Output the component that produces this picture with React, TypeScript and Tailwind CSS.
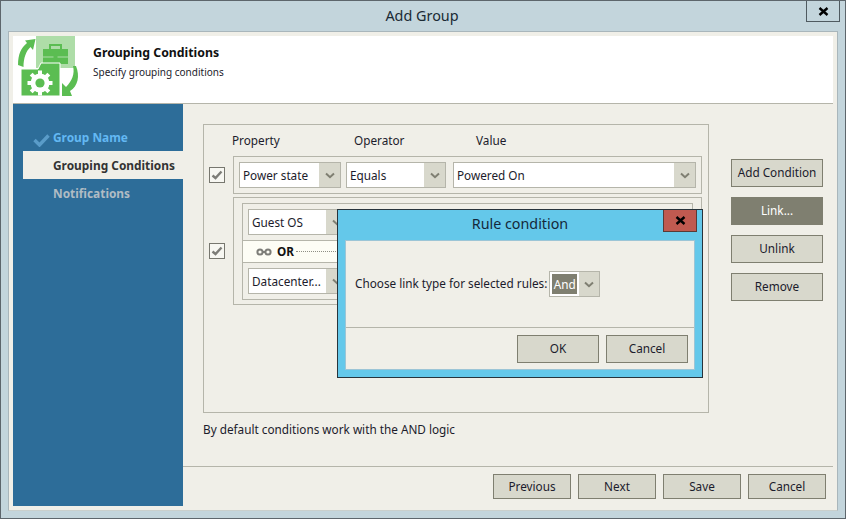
const Chevron = () => (
  <svg width="10" height="7" viewBox="0 0 10 7" className="shrink-0">
    <path d="M1 1.5 L5 5.2 L9 1.5" fill="none" stroke="#7f7f72" strokeWidth="2" />
  </svg>
);

const Combo = ({ text, className }: { text: string; className: string }) => (
  <div className={`flex h-[26px] shrink-0 border border-[#b5b5aa] bg-white ${className}`}>
    <div className="flex-1 truncate pl-[3px] leading-[24px]">{text}</div>
    <div className="flex w-[21px] items-center justify-center bg-[#d8d8cc]">
      <Chevron />
    </div>
  </div>
);

const Check = () => (
  <div className="flex h-4 w-4 shrink-0 items-center justify-center border border-[#77776f] bg-[#f7f7f2]">
    <svg width="12" height="10" viewBox="0 0 12 10">
      <path d="M1.5 5.5 L4.5 8 L10.5 1.5" fill="none" stroke="#7d7d78" strokeWidth="2.4" />
    </svg>
  </div>
);

const Btn = ({ text, className, active }: { text: string; className: string; active?: boolean }) => (
  <div
    className={`flex items-center justify-center border ${
      active ? "border-[#7f7f70] bg-[#7f7f70] text-white" : "border-[#7f7f70] bg-[#d8d8cc] text-[#1c1c2c]"
    } ${className}`}
  >
    {text}
  </div>
);

const CloseX = ({ color }: { color: string }) => (
  <svg width="11" height="9" viewBox="0 0 11 9">
    <path d="M1.5 1 L9.5 8 M9.5 1 L1.5 8" fill="none" stroke={color} strokeWidth="2.4" />
  </svg>
);

const gearTeeth = [0, 45, 90, 135, 180, 225, 270, 315];

const Logo = () => (
  <svg width="62" height="61" viewBox="0 0 62 61" className="shrink-0">
    <path d="M18 0 H57 V32 H18 Z" fill="#aedda8" />
    <path d="M25 13 H50 V28 H25 Z" fill="#5bbd52" />
    <path d="M32 13 V9 H43 V13" fill="none" stroke="#5bbd52" strokeWidth="2" />
    <path d="M25 21 H50" stroke="#aedda8" strokeWidth="1" />
    <path d="M35.5 19 H39.5 V23 H35.5 Z" fill="#5bbd52" />
    <path d="M3 33 H20 L23 27 H42 V60 H3 Z" fill="#5bbd52" stroke="#ffffff" strokeWidth="1" />
    {gearTeeth.map((a) => (
      <rect key={a} x="20" y="34.5" width="4" height="5" fill="#ffffff" transform={`rotate(${a} 22 47)`} />
    ))}
    <circle cx="22" cy="47" r="9.5" fill="#ffffff" />
    <circle cx="22" cy="47" r="4.6" fill="#5bbd52" />
    <path d="M0 29 C0 18 3 12 9 7 L7 4.5 L17.5 3 L15 14 L12.5 11 C8 15 5.5 22 5.5 31 Z" fill="#5bbd52" />
    <path d="M58 30 C62 40 60 50 52 55 L54 60 L44 60 L44 47 L48 51 C54 45 57 38 55 30 Z" fill="#5bbd52" />
  </svg>
);

export default function App() {
  return (
    <div className="relative flex h-[519px] w-[846px] flex-col overflow-hidden border border-[#5d666c] bg-[#c3d5dc] font-['Noto_Sans','DejaVu_Sans',sans-serif] text-[11.75px] text-[#1c1c2c]">
      <div className="flex h-[30px] shrink-0 items-center justify-center pr-[2px] text-[14.4px] text-[#1a2a34]">Add Group</div>
      <div className="absolute right-[5px] top-0 flex h-[21px] w-[34px] items-center justify-center border border-[#4f5a60] border-t-0">
        <CloseX color="#000" />
      </div>

      <div className="mx-[7px] flex h-[480px] flex-col border border-[#a9b6bb] border-b-[#c9cfcc] bg-[#f0efe8] p-[4px]">
        <div className="flex h-[68px] shrink-0 items-start border-b border-[#b5b5aa] bg-white pl-[5px]">
          <Logo />
          <div className="pl-[13px] pt-[9px]">
            <div className="text-[12.3px] font-bold leading-[16px] text-[#111]">Grouping Conditions</div>
            <div className="mt-[3px] text-[10px] leading-[16px]">Specify grouping conditions</div>
          </div>
        </div>

        <div className="flex min-h-0 flex-1">
          <div className="w-[170px] shrink-0 bg-[#2d6d99] pl-[10px] pt-[19px] text-[11.9px] font-bold">
            <div className="relative h-[28px] pl-[30px] leading-[28px] text-[#63b8f3]">
              <svg width="17" height="13" viewBox="0 0 17 13" className="absolute left-[10px] top-[11px]">
                <path d="M1.5 6 L6.5 11 L15.5 1.5" fill="none" stroke="#5a9cc9" strokeWidth="3.4" />
              </svg>
              Group Name
            </div>
            <div className="h-[28px] bg-[#f0efe8] pl-[30px] leading-[28px] text-[#333]">Grouping Conditions</div>
            <div className="h-[28px] pl-[30px] leading-[28px] text-[#b0bcc4]">Notifications</div>
          </div>

          <div className="flex min-w-0 flex-1 flex-col">
            <div className="flex flex-1 pl-[20px] pt-[20px]">
              <div className="flex w-[506px] shrink-0 flex-col">
                <div className="h-[289px] border border-[#b5b5aa] pl-[5px] pr-[6px]">
                  <div className="flex h-[31px] items-center pl-[23px] pt-[1px]">
                    <span className="w-[122px]">Property</span>
                    <span className="w-[122px]">Operator</span>
                    <span>Value</span>
                  </div>
                  <div className="flex items-center gap-[8px]">
                    <Check />
                    <div className="flex h-[38px] flex-1 items-center border border-[#b5b5aa] px-[5px]">
                      <Combo text="Power state" className="w-[102px]" />
                      <Combo text="Equals" className="ml-[5px] w-[100px]" />
                      <Combo text="Powered On" className="ml-[7px] flex-1" />
                    </div>
                  </div>
                  <div className="mt-[3px] flex items-center gap-[8px]">
                    <Check />
                    <div className="h-[108px] flex-1 border border-[#b5b5aa] px-[8px] pt-[5px]">
                      <div className="h-[97px] border border-[#b5b5aa]">
                        <div className="flex h-[36px] items-center pl-[5px]">
                          <Combo text="Guest OS" className="w-[100px]" />
                        </div>
                        <div className="flex h-[23px] items-center border-y border-[#b5b5aa] bg-[#fdfdf5] pl-[13px]">
                          <svg width="16" height="8" viewBox="0 0 16 8" className="shrink-0">
                            <circle cx="4" cy="4" r="2.6" fill="none" stroke="#7d7d78" strokeWidth="2" />
                            <circle cx="12" cy="4" r="2.6" fill="none" stroke="#7d7d78" strokeWidth="2" />
                            <path d="M6 4 H10" stroke="#7d7d78" strokeWidth="2" />
                          </svg>
                          <span className="ml-[5px] font-bold text-[#111]">OR</span>
                          <div className="ml-[2px] h-0 flex-1 border-t border-dotted border-[#8f8f85]" />
                        </div>
                        <div className="flex h-[36px] items-center pl-[5px]">
                          <Combo text="Datacenter..." className="w-[100px]" />
                        </div>
                      </div>
                    </div>
                  </div>
                </div>
                <div className="pt-[8px] leading-[16px]">By default conditions work with the AND logic</div>
              </div>
              <div className="ml-[22px] flex w-[92px] flex-col gap-[10px] pt-[35px]">
                <Btn text="Add Condition" className="h-[28px]" />
                <Btn text="Link..." className="h-[28px]" active />
                <Btn text="Unlink" className="h-[28px]" />
                <Btn text="Remove" className="h-[28px]" />
              </div>
            </div>
            <div className="flex h-[40px] shrink-0 justify-end gap-[7px] border-t border-[#b5b5aa] pr-[7px] pt-[7px]">
              <Btn text="Previous" className="h-[25px] w-[78px]" />
              <Btn text="Next" className="h-[25px] w-[78px]" />
              <Btn text="Save" className="h-[25px] w-[78px]" />
              <Btn text="Cancel" className="h-[25px] w-[78px]" />
            </div>
          </div>
        </div>
      </div>

      <div className="absolute left-[336px] top-[208px] flex h-[169px] w-[366px] flex-col border border-[#27343c] bg-[#64c8ea] px-[7px] pb-[7px]">
        <div className="flex h-[30px] shrink-0 items-center justify-center pb-[3px] text-[14.3px] text-[#14283a]">Rule condition</div>
        <div className="absolute right-[5px] top-0 flex h-[22px] w-[34px] items-center justify-center border border-[#5a3a36] border-t-0 bg-[#c05a50]">
          <CloseX color="#000" />
        </div>
        <div className="flex flex-1 flex-col border border-[#9cc5d6] bg-[#f0efe8]">
          <div className="flex h-[87px] items-center border-b border-[#b5b5aa] pl-[9px]">
            <span>Choose link type for selected rules:</span>
            <div className="ml-[2px] flex h-[26px] w-[51px] border border-[#b5b5aa] bg-white">
              <div className="m-[2px] w-[25px] bg-[#7f7f70] text-center leading-[20px] text-white">And</div>
              <div className="flex flex-1 items-center justify-center bg-[#d8d8cc]">
                <Chevron />
              </div>
            </div>
          </div>
          <div className="flex flex-1 justify-end gap-[7px] pr-[6px] pt-[7px]">
            <Btn text="OK" className="h-[28px] w-[82px]" />
            <Btn text="Cancel" className="h-[28px] w-[82px]" />
          </div>
        </div>
      </div>
    </div>
  );
}
